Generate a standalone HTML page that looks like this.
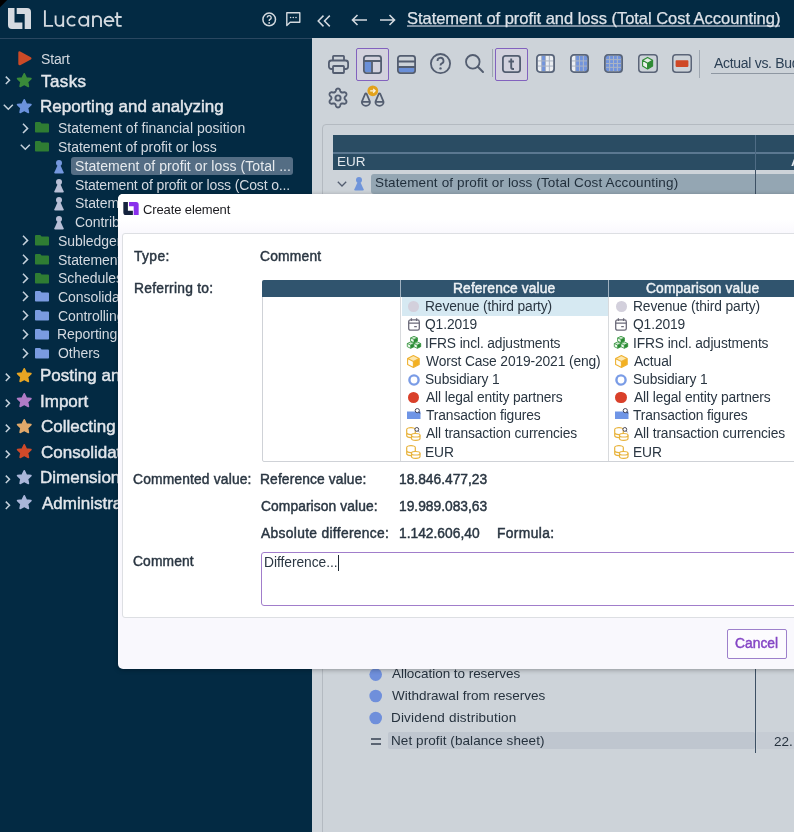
<!DOCTYPE html>
<html><head><meta charset="utf-8"><title>Lucanet</title>
<style>
html,body{margin:0;padding:0;width:794px;height:832px;overflow:hidden;background:#032a43;font-family:"Liberation Sans",sans-serif;}
body{position:relative;}
.t{position:absolute;white-space:nowrap;line-height:1;font-family:"Liberation Sans",sans-serif;-webkit-font-smoothing:antialiased;will-change:transform;}
.a{position:absolute;}
svg{position:absolute;overflow:visible;}
</style></head><body>
<!-- ===== header ===== -->
<div class="a" style="left:0;top:0;width:794px;height:38px;background:#032a43"></div>
<div class="a" style="left:0;top:38px;width:312px;height:1px;background:#2a4760"></div>
<!-- window corner -->
<svg style="left:0;top:0" width="10" height="10"><path d="M0 0H7.2L0 7.2Z" fill="#000"/></svg>
<!-- logo -->
<svg style="left:8px;top:8px" width="23" height="21" viewBox="0 0 23 21">
<path d="M0 0H6.5V14.4H14.4V21H4A4 4 0 0 1 0 17Z" fill="#d5dae0"/>
<path d="M8.7 0H19A4 4 0 0 1 23 4V21H16.7V6.1H8.7Z" fill="#d5dae0"/>
</svg>
<svg style="left:0;top:0" width="130" height="32" viewBox="0 0 130 32">
<g fill="none" stroke="#d3d9df" stroke-width="1.9">
<path d="M44.9 10.2V25.9H53.1"/>
<path d="M55.6 15.4V22.1A3.8 3.8 0 0 0 63.2 22.1V15.4M63.2 21V26.9"/>
<path d="M75.2 17.9A4.55 4.55 0 1 0 75.2 24.3"/>
<circle cx="83.6" cy="21.15" r="4.45"/>
<path d="M88.2 15.4V26.9"/>
<path d="M93 15.4V26.9M93 20.1A4 4 0 0 1 101 20.1V26.9"/>
<path d="M104.6 21.1H113.4A4.4 4.4 0 1 0 112.1 24.3"/>
<path d="M117.2 12.3V24.2Q117.2 25.9 119.4 25.9H121.7M114.7 17H121.7"/>
</g></svg>
<!-- header icons -->
<svg style="left:262px;top:12px" width="15" height="15" viewBox="0 0 15 15">
<circle cx="7.2" cy="7.4" r="6.3" fill="none" stroke="#d3d9df" stroke-width="1.5"/>
<path d="M5.2 5.6A2 2 0 1 1 7.9 7.5C7.3 7.8 7.2 8.2 7.2 8.9" fill="none" stroke="#d3d9df" stroke-width="1.4"/>
<circle cx="7.2" cy="10.9" r="0.9" fill="#d3d9df"/>
</svg>
<svg style="left:286px;top:12px" width="15" height="15" viewBox="0 0 15 15">
<path d="M0.8 0.8H13.8V10.2H4.2L0.8 13.6Z" fill="none" stroke="#d3d9df" stroke-width="1.4" stroke-linejoin="round"/>
<circle cx="4.6" cy="5.5" r="0.8" fill="#d3d9df"/><circle cx="7.3" cy="5.5" r="0.8" fill="#d3d9df"/><circle cx="10" cy="5.5" r="0.8" fill="#d3d9df"/>
</svg>
<svg style="left:317px;top:14.5px" width="15" height="12" viewBox="0 0 15 12">
<path d="M6.5 0.6L1.2 6L6.5 11.4M12.8 0.6L7.5 6L12.8 11.4" fill="none" stroke="#d3d9df" stroke-width="1.5"/>
</svg>
<svg style="left:351px;top:14px" width="17" height="12" viewBox="0 0 17 12">
<path d="M16 6H1.5M6.5 1L1.5 6L6.5 11" fill="none" stroke="#d3d9df" stroke-width="1.6"/>
</svg>
<svg style="left:379px;top:14px" width="17" height="12" viewBox="0 0 17 12">
<path d="M1 6H15.5M10.5 1L15.5 6L10.5 11" fill="none" stroke="#d3d9df" stroke-width="1.6"/>
</svg>

<!-- ===== sidebar ===== -->
<div class="a" style="left:71.2px;top:157px;width:222px;height:18.2px;background:#546d84;border-radius:3px"></div>
<!-- start triangle -->
<svg style="left:18px;top:50.6px" width="14" height="15" viewBox="0 0 14 15">
<path d="M1.6 1.6L12.2 7.3L1.6 13Z" fill="#cb4a27" stroke="#cb4a27" stroke-width="2.6" stroke-linejoin="round"/>
</svg>
<svg style="left:4.6px;top:76.4px" width="5.60" height="8.80" viewBox="0 0 7 11"><path d="M1 0.8L5.6 5.4L1 10" fill="none" stroke="#c6d2dc" stroke-width="1.88"/></svg>
<svg style="left:16px;top:72.2px" width="16.5" height="16.5" viewBox="0 0 24 24"><path d="M12.00 2.60L14.94 8.75L21.70 9.65L16.76 14.35L18.00 21.05L12.00 17.80L6.00 21.05L7.24 14.35L2.30 9.65L9.06 8.75Z" fill="#3a8a3a" stroke="#3a8a3a" stroke-width="2.4" stroke-linejoin="round"/></svg>
<svg style="left:3px;top:104px" width="11" height="6" viewBox="0 0 11 6"><path d="M0.8 0.8L5.3 5.2L9.8 0.8" fill="none" stroke="#c6d2dc" stroke-width="1.5"/></svg>
<svg style="left:16px;top:97.6px" width="16.5" height="16.5" viewBox="0 0 24 24"><path d="M12.00 2.60L14.94 8.75L21.70 9.65L16.76 14.35L18.00 21.05L12.00 17.80L6.00 21.05L7.24 14.35L2.30 9.65L9.06 8.75Z" fill="#6b92dc" stroke="#6b92dc" stroke-width="2.4" stroke-linejoin="round"/></svg>
<svg style="left:21.5px;top:122.6px" width="7.00" height="11.00" viewBox="0 0 7 11"><path d="M1 0.8L5.6 5.4L1 10" fill="none" stroke="#c6d2dc" stroke-width="1.50"/></svg>
<svg style="left:34.9px;top:122.4px" width="14" height="11" viewBox="0 0 14 11"><path d="M0 1Q0 0 1 0H5.2L6.6 1.6H13Q14 1.6 14 2.6V9.8Q14 10.6 13.2 10.6H0.8Q0 10.6 0 9.8Z" fill="#2f7d33"/></svg>
<svg style="left:19.5px;top:144px" width="11" height="6" viewBox="0 0 11 6"><path d="M0.8 0.8L5.3 5.2L9.8 0.8" fill="none" stroke="#c6d2dc" stroke-width="1.5"/></svg>
<svg style="left:34.9px;top:141.1px" width="14" height="11" viewBox="0 0 14 11"><path d="M0 1Q0 0 1 0H5.2L6.6 1.6H13Q14 1.6 14 2.6V9.8Q14 10.6 13.2 10.6H0.8Q0 10.6 0 9.8Z" fill="#2f7d33"/></svg>
<svg style="left:53.8px;top:159.8px" width="10" height="14" viewBox="0 0 10 14"><circle cx="5" cy="3" r="3" fill="#7497de"/><path d="M3.9 4.5H6.1L9.6 12.2Q10 13.6 8.8 13.6H1.2Q0 13.6 0.4 12.2Z" fill="#7497de"/></svg>
<svg style="left:53.8px;top:178.5px" width="10" height="14" viewBox="0 0 10 14"><circle cx="5" cy="3" r="3" fill="#b8bfd6"/><path d="M3.9 4.5H6.1L9.6 12.2Q10 13.6 8.8 13.6H1.2Q0 13.6 0.4 12.2Z" fill="#b8bfd6"/></svg>
<svg style="left:53.8px;top:197.20000000000002px" width="10" height="14" viewBox="0 0 10 14"><circle cx="5" cy="3" r="3" fill="#b8bfd6"/><path d="M3.9 4.5H6.1L9.6 12.2Q10 13.6 8.8 13.6H1.2Q0 13.6 0.4 12.2Z" fill="#b8bfd6"/></svg>
<svg style="left:53.8px;top:215.9px" width="10" height="14" viewBox="0 0 10 14"><circle cx="5" cy="3" r="3" fill="#b8bfd6"/><path d="M3.9 4.5H6.1L9.6 12.2Q10 13.6 8.8 13.6H1.2Q0 13.6 0.4 12.2Z" fill="#b8bfd6"/></svg>
<svg style="left:21.5px;top:235.3px" width="7.00" height="11.00" viewBox="0 0 7 11"><path d="M1 0.8L5.6 5.4L1 10" fill="none" stroke="#c6d2dc" stroke-width="1.50"/></svg>
<svg style="left:34.9px;top:235.3px" width="14" height="11" viewBox="0 0 14 11"><path d="M0 1Q0 0 1 0H5.2L6.6 1.6H13Q14 1.6 14 2.6V9.8Q14 10.6 13.2 10.6H0.8Q0 10.6 0 9.8Z" fill="#2f7d33"/></svg>
<svg style="left:21.5px;top:254.0px" width="7.00" height="11.00" viewBox="0 0 7 11"><path d="M1 0.8L5.6 5.4L1 10" fill="none" stroke="#c6d2dc" stroke-width="1.50"/></svg>
<svg style="left:34.9px;top:254.0px" width="14" height="11" viewBox="0 0 14 11"><path d="M0 1Q0 0 1 0H5.2L6.6 1.6H13Q14 1.6 14 2.6V9.8Q14 10.6 13.2 10.6H0.8Q0 10.6 0 9.8Z" fill="#2f7d33"/></svg>
<svg style="left:21.5px;top:272.7px" width="7.00" height="11.00" viewBox="0 0 7 11"><path d="M1 0.8L5.6 5.4L1 10" fill="none" stroke="#c6d2dc" stroke-width="1.50"/></svg>
<svg style="left:34.9px;top:272.7px" width="14" height="11" viewBox="0 0 14 11"><path d="M0 1Q0 0 1 0H5.2L6.6 1.6H13Q14 1.6 14 2.6V9.8Q14 10.6 13.2 10.6H0.8Q0 10.6 0 9.8Z" fill="#2f7d33"/></svg>
<svg style="left:21.5px;top:291.4px" width="7.00" height="11.00" viewBox="0 0 7 11"><path d="M1 0.8L5.6 5.4L1 10" fill="none" stroke="#c6d2dc" stroke-width="1.50"/></svg>
<svg style="left:34.9px;top:291.4px" width="14" height="11" viewBox="0 0 14 11"><path d="M0 1Q0 0 1 0H5.2L6.6 1.6H13Q14 1.6 14 2.6V9.8Q14 10.6 13.2 10.6H0.8Q0 10.6 0 9.8Z" fill="#7a9be0"/></svg>
<svg style="left:21.5px;top:310.1px" width="7.00" height="11.00" viewBox="0 0 7 11"><path d="M1 0.8L5.6 5.4L1 10" fill="none" stroke="#c6d2dc" stroke-width="1.50"/></svg>
<svg style="left:34.9px;top:310.1px" width="14" height="11" viewBox="0 0 14 11"><path d="M0 1Q0 0 1 0H5.2L6.6 1.6H13Q14 1.6 14 2.6V9.8Q14 10.6 13.2 10.6H0.8Q0 10.6 0 9.8Z" fill="#7a9be0"/></svg>
<svg style="left:21.5px;top:328.8px" width="7.00" height="11.00" viewBox="0 0 7 11"><path d="M1 0.8L5.6 5.4L1 10" fill="none" stroke="#c6d2dc" stroke-width="1.50"/></svg>
<svg style="left:34.9px;top:328.8px" width="14" height="11" viewBox="0 0 14 11"><path d="M0 1Q0 0 1 0H5.2L6.6 1.6H13Q14 1.6 14 2.6V9.8Q14 10.6 13.2 10.6H0.8Q0 10.6 0 9.8Z" fill="#7a9be0"/></svg>
<svg style="left:21.5px;top:347.5px" width="7.00" height="11.00" viewBox="0 0 7 11"><path d="M1 0.8L5.6 5.4L1 10" fill="none" stroke="#c6d2dc" stroke-width="1.50"/></svg>
<svg style="left:34.9px;top:347.5px" width="14" height="11" viewBox="0 0 14 11"><path d="M0 1Q0 0 1 0H5.2L6.6 1.6H13Q14 1.6 14 2.6V9.8Q14 10.6 13.2 10.6H0.8Q0 10.6 0 9.8Z" fill="#7a9be0"/></svg>
<svg style="left:4.6px;top:373.3px" width="5.60" height="8.80" viewBox="0 0 7 11"><path d="M1 0.8L5.6 5.4L1 10" fill="none" stroke="#c6d2dc" stroke-width="1.88"/></svg>
<svg style="left:16px;top:366.9px" width="16.5" height="16.5" viewBox="0 0 24 24"><path d="M12.00 2.60L14.94 8.75L21.70 9.65L16.76 14.35L18.00 21.05L12.00 17.80L6.00 21.05L7.24 14.35L2.30 9.65L9.06 8.75Z" fill="#e8a523" stroke="#e8a523" stroke-width="2.4" stroke-linejoin="round"/></svg>
<svg style="left:4.6px;top:398.8px" width="5.60" height="8.80" viewBox="0 0 7 11"><path d="M1 0.8L5.6 5.4L1 10" fill="none" stroke="#c6d2dc" stroke-width="1.88"/></svg>
<svg style="left:16px;top:392.4px" width="16.5" height="16.5" viewBox="0 0 24 24"><path d="M12.00 2.60L14.94 8.75L21.70 9.65L16.76 14.35L18.00 21.05L12.00 17.80L6.00 21.05L7.24 14.35L2.30 9.65L9.06 8.75Z" fill="#b07cc6" stroke="#b07cc6" stroke-width="2.4" stroke-linejoin="round"/></svg>
<svg style="left:4.6px;top:424.3px" width="5.60" height="8.80" viewBox="0 0 7 11"><path d="M1 0.8L5.6 5.4L1 10" fill="none" stroke="#c6d2dc" stroke-width="1.88"/></svg>
<svg style="left:16px;top:417.9px" width="16.5" height="16.5" viewBox="0 0 24 24"><path d="M12.00 2.60L14.94 8.75L21.70 9.65L16.76 14.35L18.00 21.05L12.00 17.80L6.00 21.05L7.24 14.35L2.30 9.65L9.06 8.75Z" fill="#e0a86a" stroke="#e0a86a" stroke-width="2.4" stroke-linejoin="round"/></svg>
<svg style="left:4.6px;top:449.8px" width="5.60" height="8.80" viewBox="0 0 7 11"><path d="M1 0.8L5.6 5.4L1 10" fill="none" stroke="#c6d2dc" stroke-width="1.88"/></svg>
<svg style="left:16px;top:443.4px" width="16.5" height="16.5" viewBox="0 0 24 24"><path d="M12.00 2.60L14.94 8.75L21.70 9.65L16.76 14.35L18.00 21.05L12.00 17.80L6.00 21.05L7.24 14.35L2.30 9.65L9.06 8.75Z" fill="#cf4a2a" stroke="#cf4a2a" stroke-width="2.4" stroke-linejoin="round"/></svg>
<svg style="left:4.6px;top:475.3px" width="5.60" height="8.80" viewBox="0 0 7 11"><path d="M1 0.8L5.6 5.4L1 10" fill="none" stroke="#c6d2dc" stroke-width="1.88"/></svg>
<svg style="left:16px;top:468.9px" width="16.5" height="16.5" viewBox="0 0 24 24"><path d="M12.00 2.60L14.94 8.75L21.70 9.65L16.76 14.35L18.00 21.05L12.00 17.80L6.00 21.05L7.24 14.35L2.30 9.65L9.06 8.75Z" fill="#aab6d9" stroke="#aab6d9" stroke-width="2.4" stroke-linejoin="round"/></svg>
<svg style="left:4.6px;top:500.8px" width="5.60" height="8.80" viewBox="0 0 7 11"><path d="M1 0.8L5.6 5.4L1 10" fill="none" stroke="#c6d2dc" stroke-width="1.88"/></svg>
<svg style="left:16px;top:494.4px" width="16.5" height="16.5" viewBox="0 0 24 24"><path d="M12.00 2.60L14.94 8.75L21.70 9.65L16.76 14.35L18.00 21.05L12.00 17.80L6.00 21.05L7.24 14.35L2.30 9.65L9.06 8.75Z" fill="#aab6d9" stroke="#aab6d9" stroke-width="2.4" stroke-linejoin="round"/></svg>

<!-- ===== content ===== -->
<div class="a" style="left:312px;top:38px;width:482px;height:794px;background:#cdd3d9"></div>
<!-- toolbar row 1 -->
<svg style="left:328px;top:54.5px" width="21" height="19" viewBox="0 0 21 19">
<path d="M5 5.5V1.5Q5 0.8 5.7 0.8H15.3Q16 0.8 16 1.5V5.5" fill="none" stroke="#535d70" stroke-width="1.8"/>
<rect x="0.9" y="5.5" width="19.2" height="8.5" rx="2.5" fill="none" stroke="#535d70" stroke-width="1.8"/>
<rect x="5" y="11" width="11" height="7" rx="0.8" fill="#cdd3d9" stroke="#535d70" stroke-width="1.8"/>
</svg>
<div class="a" style="left:356px;top:48px;width:30.5px;height:30.5px;border:1px solid #8262be;border-radius:2px;background:#d3d2de"></div>
<svg style="left:363px;top:54.5px" width="19" height="19" viewBox="0 0 19 19">
<rect x="1.5" y="6" width="7" height="11" fill="#6a8fd8"/>
<rect x="0.9" y="0.9" width="17.2" height="17.2" rx="2.5" fill="none" stroke="#535d70" stroke-width="1.8"/>
<path d="M1 6H18M9 6V18" stroke="#535d70" stroke-width="1.8"/>
</svg>
<svg style="left:396.5px;top:54.5px" width="19" height="19" viewBox="0 0 19 19">
<rect x="1.5" y="12" width="16" height="5.5" fill="#6a8fd8"/>
<rect x="0.9" y="0.9" width="17.2" height="17.2" rx="2.5" fill="none" stroke="#535d70" stroke-width="1.8"/>
<path d="M1 6.5H18M1 12H18" stroke="#535d70" stroke-width="1.8"/>
</svg>
<svg style="left:430px;top:53px" width="21" height="21" viewBox="0 0 21 21">
<circle cx="10.5" cy="10.6" r="9.6" fill="none" stroke="#535d70" stroke-width="1.8"/>
<path d="M7.5 8A3 3 0 1 1 11.5 10.6C10.8 11 10.5 11.5 10.5 12.6" fill="none" stroke="#535d70" stroke-width="1.8"/>
<circle cx="10.5" cy="15.4" r="1.2" fill="#535d70"/>
</svg>
<svg style="left:465px;top:54px" width="19" height="19" viewBox="0 0 19 19">
<circle cx="7.8" cy="7.8" r="6.8" fill="none" stroke="#535d70" stroke-width="1.8"/>
<path d="M12.8 12.8L18 18" stroke="#535d70" stroke-width="2" stroke-linecap="round"/>
</svg>
<div class="a" style="left:492px;top:49px;width:1px;height:28px;background:#a0a8b2"></div>
<div class="a" style="left:495px;top:48px;width:30.5px;height:30.5px;border:1px solid #8262be;border-radius:2px;background:#d3d2de"></div>
<svg style="left:501.5px;top:55px" width="19" height="18" viewBox="0 0 19 18">
<rect x="0.9" y="0.9" width="17.2" height="16.2" rx="2.5" fill="none" stroke="#535d70" stroke-width="1.8"/>
<path d="M9.2 3.5V12.3Q9.2 14 11 14H12M6.5 6.5H12" fill="none" stroke="#535d70" stroke-width="1.9"/>
</svg>
<!-- grids -->
<svg style="left:535.7px;top:54.4px" width="19" height="19" viewBox="0 0 19 19"><rect x="0.9" y="0.9" width="17.2" height="17.2" rx="3" fill="#eceff3"/><rect x="5.65" y="1.80" width="3.85" height="15.40" fill="#7294dc"/><path d="M5.65 1.8V17.2" stroke="#aab4c4" stroke-width="1"/><path d="M9.50 1.8V17.2" stroke="#aab4c4" stroke-width="1"/><path d="M13.35 1.8V17.2" stroke="#aab4c4" stroke-width="1"/><path d="M1.8 6.93H17.2" stroke="#aab4c4" stroke-width="1"/><path d="M1.8 12.07H17.2" stroke="#aab4c4" stroke-width="1"/><rect x="0.9" y="0.9" width="17.2" height="17.2" rx="3" fill="none" stroke="#59657a" stroke-width="1.8"/></svg>
<svg style="left:570.2px;top:54.4px" width="19" height="19" viewBox="0 0 19 19"><rect x="0.9" y="0.9" width="17.2" height="17.2" rx="3" fill="#eceff3"/><rect x="5.65" y="1.80" width="3.85" height="15.40" fill="#7294dc"/><rect x="9.50" y="1.80" width="3.85" height="15.40" fill="#7294dc"/><rect x="13.35" y="1.80" width="3.85" height="15.40" fill="#7294dc"/><path d="M5.65 1.8V17.2" stroke="#aab4c4" stroke-width="1"/><path d="M9.50 1.8V17.2" stroke="#aab4c4" stroke-width="1"/><path d="M13.35 1.8V17.2" stroke="#aab4c4" stroke-width="1"/><path d="M1.8 6.93H17.2" stroke="#aab4c4" stroke-width="1"/><path d="M1.8 12.07H17.2" stroke="#aab4c4" stroke-width="1"/><rect x="0.9" y="0.9" width="17.2" height="17.2" rx="3" fill="none" stroke="#59657a" stroke-width="1.8"/></svg>
<svg style="left:603.8px;top:54.4px" width="19" height="19" viewBox="0 0 19 19"><rect x="0.9" y="0.9" width="17.2" height="17.2" rx="3" fill="#eceff3"/><rect x="1.80" y="1.80" width="3.85" height="15.40" fill="#7294dc"/><rect x="5.65" y="1.80" width="3.85" height="15.40" fill="#7294dc"/><rect x="9.50" y="1.80" width="3.85" height="15.40" fill="#7294dc"/><rect x="13.35" y="1.80" width="3.85" height="15.40" fill="#7294dc"/><path d="M5.65 1.8V17.2" stroke="#aab4c4" stroke-width="1"/><path d="M9.50 1.8V17.2" stroke="#aab4c4" stroke-width="1"/><path d="M13.35 1.8V17.2" stroke="#aab4c4" stroke-width="1"/><path d="M1.8 5.65H17.2" stroke="#aab4c4" stroke-width="1"/><path d="M1.8 9.50H17.2" stroke="#aab4c4" stroke-width="1"/><path d="M1.8 13.35H17.2" stroke="#aab4c4" stroke-width="1"/><rect x="0.9" y="0.9" width="17.2" height="17.2" rx="3" fill="none" stroke="#59657a" stroke-width="1.8"/></svg>
<svg style="left:637.5px;top:54px" width="20" height="19" viewBox="0 0 20 19">
<rect x="0.75" y="0.75" width="18.5" height="17.5" rx="3.2" fill="none" stroke="#5b6578" stroke-width="1.5"/>
<path d="M9.60 3.40L14.60 6.30L9.60 9.20L4.60 6.30Z" fill="#e3ece4"/><path d="M4.60 6.30L9.60 9.20L9.60 15.00L4.60 12.10Z" fill="#eef3ef"/><path d="M9.60 9.20L14.60 6.30L14.60 12.10L9.60 15.00Z" fill="#2e8b34"/><path d="M9.60 3.40L14.60 6.30L14.60 12.10L9.60 15.00L4.60 12.10L4.60 6.30ZM4.60 6.30L9.60 9.20L14.60 6.30M9.60 9.20L9.60 15.00" fill="none" stroke="#2e8b34" stroke-width="1.1" stroke-linejoin="round"/>
</svg>
<svg style="left:671.5px;top:54px" width="20" height="19" viewBox="0 0 20 19">
<rect x="0.75" y="0.75" width="18.5" height="17.5" rx="3.2" fill="none" stroke="#5b6578" stroke-width="1.5"/>
<rect x="3.6" y="6.3" width="12.8" height="6.6" rx="0.8" fill="#cf4826"/>
</svg>
<div class="a" style="left:699.2px;top:50px;width:1px;height:28px;background:#a0a8b2"></div>
<div class="a" style="left:711px;top:72.5px;width:83px;height:1px;background:#8e97a2"></div>
<!-- toolbar row 2 -->
<svg style="left:327.1px;top:87px" width="22" height="22" viewBox="0 0 22 22">
<path d="M17.55 11.00L17.55 10.89L17.57 10.77L17.59 10.65L17.62 10.54L17.66 10.42L17.71 10.29L17.77 10.17L17.84 10.04L17.91 9.90L18.00 9.77L18.09 9.62L18.20 9.47L18.32 9.31L18.47 9.14L18.73 8.93L18.98 8.71L19.11 8.52L19.21 8.33L19.29 8.14L19.36 7.96L19.40 7.77L19.43 7.59L19.45 7.41L19.45 7.24L19.44 7.06L19.41 6.90L19.38 6.73L19.32 6.57L19.26 6.42L19.18 6.28L19.10 6.14L19.00 6.00L18.88 5.88L18.76 5.77L18.63 5.66L18.48 5.56L18.33 5.48L18.17 5.40L17.99 5.34L17.81 5.28L17.62 5.24L17.42 5.22L17.20 5.21L16.97 5.24L16.66 5.34L16.35 5.46L16.13 5.50L15.93 5.53L15.74 5.55L15.57 5.56L15.41 5.56L15.25 5.56L15.11 5.55L14.97 5.54L14.84 5.52L14.71 5.50L14.59 5.46L14.48 5.43L14.38 5.38L14.28 5.33L14.18 5.27L14.09 5.20L14.00 5.12L13.91 5.03L13.83 4.94L13.75 4.83L13.67 4.72L13.59 4.60L13.51 4.46L13.43 4.32L13.35 4.17L13.28 4.00L13.20 3.81L13.12 3.60L13.07 3.27L13.01 2.95L12.91 2.73L12.80 2.55L12.67 2.39L12.54 2.24L12.41 2.11L12.27 1.99L12.12 1.89L11.97 1.80L11.81 1.72L11.65 1.66L11.49 1.61L11.33 1.58L11.16 1.56L11.00 1.55L10.84 1.56L10.67 1.58L10.51 1.61L10.35 1.66L10.19 1.72L10.03 1.80L9.88 1.89L9.73 1.99L9.59 2.11L9.46 2.24L9.33 2.39L9.20 2.55L9.09 2.73L8.99 2.95L8.93 3.27L8.88 3.60L8.80 3.81L8.72 4.00L8.65 4.17L8.57 4.32L8.49 4.46L8.41 4.60L8.33 4.72L8.25 4.83L8.17 4.94L8.09 5.03L8.00 5.12L7.91 5.20L7.82 5.27L7.73 5.33L7.62 5.38L7.52 5.43L7.41 5.46L7.29 5.50L7.16 5.52L7.03 5.54L6.89 5.55L6.75 5.56L6.59 5.56L6.43 5.56L6.26 5.55L6.07 5.53L5.87 5.50L5.65 5.46L5.34 5.34L5.03 5.24L4.80 5.21L4.58 5.22L4.38 5.24L4.19 5.28L4.01 5.34L3.83 5.40L3.67 5.48L3.52 5.56L3.37 5.66L3.24 5.77L3.12 5.88L3.00 6.00L2.90 6.14L2.82 6.28L2.74 6.42L2.68 6.57L2.62 6.73L2.59 6.90L2.56 7.06L2.55 7.24L2.55 7.41L2.57 7.59L2.60 7.77L2.64 7.96L2.71 8.14L2.79 8.33L2.89 8.52L3.02 8.71L3.27 8.93L3.53 9.14L3.68 9.31L3.80 9.47L3.91 9.62L4.00 9.77L4.09 9.90L4.16 10.04L4.23 10.17L4.29 10.29L4.34 10.42L4.38 10.54L4.41 10.65L4.43 10.77L4.45 10.89L4.45 11.00L4.45 11.11L4.43 11.23L4.41 11.35L4.38 11.46L4.34 11.58L4.29 11.71L4.23 11.83L4.16 11.96L4.09 12.10L4.00 12.23L3.91 12.38L3.80 12.53L3.68 12.69L3.53 12.86L3.27 13.07L3.02 13.29L2.89 13.48L2.79 13.67L2.71 13.86L2.64 14.04L2.60 14.23L2.57 14.41L2.55 14.59L2.55 14.76L2.56 14.94L2.59 15.10L2.62 15.27L2.68 15.43L2.74 15.58L2.82 15.73L2.90 15.86L3.00 16.00L3.12 16.12L3.24 16.23L3.37 16.34L3.52 16.44L3.67 16.52L3.83 16.60L4.01 16.66L4.19 16.72L4.38 16.76L4.58 16.78L4.80 16.79L5.03 16.76L5.34 16.66L5.65 16.54L5.87 16.50L6.07 16.47L6.26 16.45L6.43 16.44L6.59 16.44L6.75 16.44L6.89 16.45L7.03 16.46L7.16 16.48L7.29 16.50L7.41 16.54L7.52 16.57L7.62 16.62L7.72 16.67L7.82 16.73L7.91 16.80L8.00 16.88L8.09 16.97L8.17 17.06L8.25 17.17L8.33 17.28L8.41 17.40L8.49 17.54L8.57 17.68L8.65 17.83L8.72 18.00L8.80 18.19L8.88 18.40L8.93 18.73L8.99 19.05L9.09 19.27L9.20 19.45L9.33 19.61L9.46 19.76L9.59 19.89L9.73 20.01L9.88 20.11L10.03 20.20L10.19 20.28L10.35 20.34L10.51 20.39L10.67 20.42L10.84 20.44L11.00 20.45L11.16 20.44L11.33 20.42L11.49 20.39L11.65 20.34L11.81 20.28L11.97 20.20L12.12 20.11L12.27 20.01L12.41 19.89L12.54 19.76L12.67 19.61L12.80 19.45L12.91 19.27L13.01 19.05L13.07 18.73L13.12 18.40L13.20 18.19L13.28 18.00L13.35 17.83L13.43 17.68L13.51 17.54L13.59 17.40L13.67 17.28L13.75 17.17L13.83 17.06L13.91 16.97L14.00 16.88L14.09 16.80L14.18 16.73L14.28 16.67L14.38 16.62L14.48 16.57L14.59 16.54L14.71 16.50L14.84 16.48L14.97 16.46L15.11 16.45L15.25 16.44L15.41 16.44L15.57 16.44L15.74 16.45L15.93 16.47L16.13 16.50L16.35 16.54L16.66 16.66L16.97 16.76L17.20 16.79L17.42 16.78L17.62 16.76L17.81 16.72L17.99 16.66L18.17 16.60L18.33 16.52L18.48 16.44L18.63 16.34L18.76 16.23L18.88 16.12L19.00 16.00L19.10 15.86L19.18 15.73L19.26 15.58L19.32 15.43L19.38 15.27L19.41 15.10L19.44 14.94L19.45 14.76L19.45 14.59L19.43 14.41L19.40 14.23L19.36 14.04L19.29 13.86L19.21 13.67L19.11 13.48L18.98 13.29L18.73 13.07L18.47 12.86L18.32 12.69L18.20 12.53L18.09 12.38L18.00 12.23L17.91 12.10L17.84 11.96L17.77 11.83L17.71 11.71L17.66 11.58L17.62 11.46L17.59 11.35L17.57 11.23L17.55 11.11Z" fill="none" stroke="#535d70" stroke-width="1.9" stroke-linejoin="round"/>
<circle cx="11" cy="11" r="2.6" fill="none" stroke="#535d70" stroke-width="1.9"/>
</svg>
<svg style="left:359.5px;top:85px" width="26" height="23" viewBox="0 0 26 23">
<path d="M1.8 16.8L5.1 9Q5.9 7.6 6.7 9L10 16.8M1.8 16.8H10A4.1 4.1 0 0 1 1.8 16.8Z" fill="none" stroke="#535d70" stroke-width="1.8" stroke-linejoin="round"/>
<path d="M15.4 16.8L18.7 9Q19.5 7.6 20.3 9L23.6 16.8M15.4 16.8H23.6A4.1 4.1 0 0 1 15.4 16.8Z" fill="none" stroke="#535d70" stroke-width="1.8" stroke-linejoin="round"/>
<circle cx="12.8" cy="5.8" r="5.4" fill="#e2a21c"/>
<path d="M10.2 5.8H15M13.2 3.9L15.1 5.8L13.2 7.7" fill="none" stroke="#fbf3de" stroke-width="1.3"/>
</svg>

<!-- content panel -->
<div class="a" style="left:321.5px;top:124px;width:500px;height:760px;border:1px solid #b4bac1;border-radius:4px;"></div>
<div class="a" style="left:333px;top:135.3px;width:461px;height:34.7px;background:#2a4c63"></div>
<div class="a" style="left:333px;top:152.2px;width:461px;height:1.6px;background:#5b7891"></div>
<div class="a" style="left:755px;top:135.3px;width:1px;height:34.7px;background:#4f6c85"></div>
<svg style="left:337px;top:180.5px" width="10" height="6" viewBox="0 0 10 6"><path d="M0.8 0.8L5 5L9.2 0.8" fill="none" stroke="#535d70" stroke-width="1.3"/></svg>
<div class="a" style="left:370.8px;top:174px;width:430px;height:19.7px;background:#94a6b3;border-radius:3px 0 0 3px"></div>
<svg style="left:354.2px;top:177px" width="10" height="14" viewBox="0 0 10 14"><circle cx="5" cy="3" r="3" fill="#6f94da"/><path d="M3.9 4.5H6.1L9.6 12.2Q10 13.6 8.8 13.6H1.2Q0 13.6 0.4 12.2Z" fill="#6f94da"/></svg>
<div class="a" style="left:755px;top:170px;width:1.4px;height:583px;background:#3d5064"></div>

<!-- bottom rows -->
<svg style="left:369px;top:668px" width="14" height="60" viewBox="0 0 14 60">
<circle cx="6.7" cy="6.6" r="6.3" fill="#6f8fdb"/>
<circle cx="6.7" cy="28" r="6.3" fill="#6f8fdb"/>
<circle cx="6.7" cy="50" r="6.3" fill="#6f8fdb"/>
</svg>
<div class="a" style="left:387.6px;top:731.8px;width:367.4px;height:17.6px;background:#bfc6cf;border-radius:2px"></div>
<div class="a" style="left:756.5px;top:731.8px;width:38px;height:17.6px;background:#c6ccd4"></div>
<div class="a" style="left:370.5px;top:738.3px;width:10px;height:1.6px;background:#5b6573"></div>
<div class="a" style="left:370.5px;top:743px;width:10px;height:1.6px;background:#5b6573"></div>

<div class="a" style="left:407.4px;top:25.2px;width:373px;height:1.5px;background:#7d90a2"></div>
<div class="t" style="left:406.70px;top:9.83px;font-size:16.5px;font-weight:normal;color:#dde2e8;letter-spacing:-0.034px;-webkit-text-stroke:0.25px #dde2e8;">Statement of profit and loss (Total Cost Accounting)</div>
<div class="t" style="left:41.00px;top:51.55px;font-size:14px;font-weight:normal;color:#d3d9e0;letter-spacing:-0.144px;">Start</div>
<div class="t" style="left:41.30px;top:72.81px;font-size:17px;font-weight:normal;color:#e2e6eb;letter-spacing:0.411px;-webkit-text-stroke:0.45px currentColor;">Tasks</div>
<div class="t" style="left:40.30px;top:98.11px;font-size:17px;font-weight:normal;color:#e2e6eb;letter-spacing:0.014px;-webkit-text-stroke:0.45px currentColor;">Reporting and analyzing</div>
<div class="t" style="left:57.80px;top:121.25px;font-size:14px;font-weight:normal;color:#d3d9e0;letter-spacing:0.017px;">Statement of financial position</div>
<div class="t" style="left:57.80px;top:139.95px;font-size:14px;font-weight:normal;color:#d3d9e0;letter-spacing:-0.031px;">Statement of profit or loss</div>
<div class="t" style="left:74.80px;top:158.85px;font-size:14px;font-weight:normal;color:#e6eaee;letter-spacing:0.075px;">Statement of profit or loss (Total ...</div>
<div class="t" style="left:74.80px;top:177.55px;font-size:14px;font-weight:normal;color:#d3d9e0;letter-spacing:-0.135px;">Statement of profit or loss (Cost o...</div>
<div class="t" style="left:74.80px;top:196.35px;font-size:14px;font-weight:normal;color:#d3d9e0;letter-spacing:-0.050px;">Statement</div>
<div class="t" style="left:74.70px;top:215.15px;font-size:14px;font-weight:normal;color:#d3d9e0;letter-spacing:-0.050px;">Contribution</div>
<div class="t" style="left:57.80px;top:233.85px;font-size:14px;font-weight:normal;color:#d3d9e0;letter-spacing:-0.050px;">Subledgers</div>
<div class="t" style="left:57.80px;top:252.55px;font-size:14px;font-weight:normal;color:#d3d9e0;letter-spacing:-0.050px;">Statements</div>
<div class="t" style="left:57.80px;top:271.25px;font-size:14px;font-weight:normal;color:#d3d9e0;letter-spacing:-0.050px;">Schedules</div>
<div class="t" style="left:57.70px;top:289.95px;font-size:14px;font-weight:normal;color:#d3d9e0;letter-spacing:-0.050px;">Consolidation</div>
<div class="t" style="left:57.70px;top:308.65px;font-size:14px;font-weight:normal;color:#d3d9e0;letter-spacing:-0.050px;">Controlling</div>
<div class="t" style="left:57.30px;top:327.35px;font-size:14px;font-weight:normal;color:#d3d9e0;letter-spacing:-0.050px;">Reporting</div>
<div class="t" style="left:57.80px;top:346.05px;font-size:14px;font-weight:normal;color:#d3d9e0;letter-spacing:-0.050px;">Others</div>
<div class="t" style="left:40.30px;top:367.11px;font-size:17px;font-weight:normal;color:#e2e6eb;letter-spacing:0.000px;-webkit-text-stroke:0.45px currentColor;">Posting and</div>
<div class="t" style="left:40.10px;top:392.61px;font-size:17px;font-weight:normal;color:#e2e6eb;letter-spacing:0.000px;-webkit-text-stroke:0.45px currentColor;">Import</div>
<div class="t" style="left:40.80px;top:418.11px;font-size:17px;font-weight:normal;color:#e2e6eb;letter-spacing:0.000px;-webkit-text-stroke:0.45px currentColor;">Collecting</div>
<div class="t" style="left:40.80px;top:443.61px;font-size:17px;font-weight:normal;color:#e2e6eb;letter-spacing:0.000px;-webkit-text-stroke:0.45px currentColor;">Consolidation</div>
<div class="t" style="left:40.30px;top:469.11px;font-size:17px;font-weight:normal;color:#e2e6eb;letter-spacing:0.000px;-webkit-text-stroke:0.45px currentColor;">Dimensions</div>
<div class="t" style="left:41.60px;top:494.61px;font-size:17px;font-weight:normal;color:#e2e6eb;letter-spacing:0.000px;-webkit-text-stroke:0.45px currentColor;">Administration</div>
<div class="t" style="left:713.80px;top:56.45px;font-size:14px;font-weight:normal;color:#2c4055;letter-spacing:-0.300px;">Actual vs. Budget</div>
<div class="t" style="left:336.70px;top:155.37px;font-size:13.5px;font-weight:normal;color:#e4e9ee;letter-spacing:0.000px;">EUR</div>
<div class="t" style="left:790.50px;top:154.87px;font-size:13.5px;font-weight:bold;color:#e4e9ee;letter-spacing:0.000px;">A</div>
<div class="t" style="left:374.80px;top:176.37px;font-size:13.5px;font-weight:normal;color:#1f2d3a;letter-spacing:0.135px;">Statement of profit or loss (Total Cost Accounting)</div>
<div class="t" style="left:392.10px;top:667.47px;font-size:13.5px;font-weight:normal;color:#26323e;letter-spacing:-0.043px;">Allocation to reserves</div>
<div class="t" style="left:392.10px;top:688.87px;font-size:13.5px;font-weight:normal;color:#26323e;letter-spacing:0.014px;">Withdrawal from reserves</div>
<div class="t" style="left:391.00px;top:710.97px;font-size:13.5px;font-weight:normal;color:#26323e;letter-spacing:0.187px;">Dividend distribution</div>
<div class="t" style="left:391.00px;top:733.67px;font-size:13.5px;font-weight:normal;color:#26323e;letter-spacing:0.077px;">Net profit (balance sheet)</div>
<div class="t" style="left:774.40px;top:734.57px;font-size:13.5px;font-weight:normal;color:#26323e;letter-spacing:0.000px;">22.</div>

<!-- ===== modal ===== -->
<div class="a" style="left:117.7px;top:193.7px;width:700px;height:475.3px;background:#f9f8fd;border-radius:5px;box-shadow:0 1px 5px rgba(0,0,0,0.3)"></div>
<div class="a" style="left:117.7px;top:193.7px;width:677px;height:40px;background:linear-gradient(#fff 0,#fff 26px,#f9f8fd 40px);border-radius:5px 0 0 0"></div>
<svg style="left:122.5px;top:202.4px" width="16" height="13" viewBox="0 0 15.1 12.8">
<path d="M0 0H4.5V8.6H9.4V12.8H2.5A2.5 2.5 0 0 1 0 10.3Z" fill="#15233d"/>
<path d="M5.6 0H12.6A2.5 2.5 0 0 1 15.1 2.5V12.8H10.2V4.1H5.6Z" fill="#8a30ec"/>
</svg>
<div class="a" style="left:122.4px;top:233.4px;width:700px;height:383px;background:#fff;border:1px solid #dddfe3;border-radius:3px"></div>
<!-- modal table -->
<div class="a" style="left:261.5px;top:280.4px;width:600px;height:179.6px;border:1px solid #cfd2d7;border-radius:2px;background:#fff"></div>
<div class="a" style="left:261.5px;top:280.4px;width:533px;height:16.8px;background:#30546e;border-radius:2px 0 0 0"></div>
<div class="a" style="left:400px;top:280.4px;width:1px;height:16.8px;background:#9fb1c0"></div>
<div class="a" style="left:608px;top:280.4px;width:1px;height:16.8px;background:#9fb1c0"></div>
<div class="a" style="left:400px;top:297.2px;width:1px;height:163.6px;background:#d8dadd"></div>
<div class="a" style="left:608px;top:297.2px;width:1px;height:163.6px;background:#d8dadd"></div>
<div class="a" style="left:401.5px;top:297.2px;width:206.5px;height:18.5px;background:#d6e9f2"></div>
<div class="a" style="left:408.20000000000005px;top:301.4px;width:10.6px;height:10.6px;border-radius:50%;background:#d3d0dc"></div>
<svg style="left:407.6px;top:318.2px" width="12" height="13" viewBox="0 0 12 13"><rect x="0.7" y="1.9" width="10.6" height="10.3" rx="1.8" fill="none" stroke="#6b6a79" stroke-width="1.3"/><path d="M0.8 5.2H11.2M3.4 0.3V3M8.6 0.3V3M6.2 8.6H8.8" stroke="#6b6a79" stroke-width="1.3"/></svg>
<svg style="left:406.6px;top:336px" width="14" height="13" viewBox="0 0 14 13"><path d="M7.00 0.30L10.40 1.90L7.00 3.50L3.60 1.90Z" fill="#cfe8cf"/><path d="M3.60 1.90L7.00 3.50L7.00 6.70L3.60 5.10Z" fill="#f2faf2"/><path d="M7.00 3.50L10.40 1.90L10.40 5.10L7.00 6.70Z" fill="#2a8a33"/><path d="M7.00 0.30L10.40 1.90L10.40 5.10L7.00 6.70L3.60 5.10L3.60 1.90ZM3.60 1.90L7.00 3.50L10.40 1.90M7.00 3.50L7.00 6.70" fill="none" stroke="#2f9038" stroke-width="0.8" stroke-linejoin="round"/><path d="M3.70 5.90L7.10 7.50L3.70 9.10L0.30 7.50Z" fill="#cfe8cf"/><path d="M0.30 7.50L3.70 9.10L3.70 12.30L0.30 10.70Z" fill="#f2faf2"/><path d="M3.70 9.10L7.10 7.50L7.10 10.70L3.70 12.30Z" fill="#2a8a33"/><path d="M3.70 5.90L7.10 7.50L7.10 10.70L3.70 12.30L0.30 10.70L0.30 7.50ZM0.30 7.50L3.70 9.10L7.10 7.50M3.70 9.10L3.70 12.30" fill="none" stroke="#2f9038" stroke-width="0.8" stroke-linejoin="round"/><path d="M10.30 5.90L13.70 7.50L10.30 9.10L6.90 7.50Z" fill="#cfe8cf"/><path d="M6.90 7.50L10.30 9.10L10.30 12.30L6.90 10.70Z" fill="#f2faf2"/><path d="M10.30 9.10L13.70 7.50L13.70 10.70L10.30 12.30Z" fill="#2a8a33"/><path d="M10.30 5.90L13.70 7.50L13.70 10.70L10.30 12.30L6.90 10.70L6.90 7.50ZM6.90 7.50L10.30 9.10L13.70 7.50M10.30 9.10L10.30 12.30" fill="none" stroke="#2f9038" stroke-width="0.8" stroke-linejoin="round"/></svg>
<svg style="left:407.0px;top:354.6px" width="13" height="13" viewBox="0 0 13 13"><path d="M6.40 0.60L12.20 3.55L6.40 6.50L0.60 3.55Z" fill="#fde7ad"/><path d="M0.60 3.55L6.40 6.50L6.40 12.40L0.60 9.45Z" fill="#fffdf5"/><path d="M6.40 6.50L12.20 3.55L12.20 9.45L6.40 12.40Z" fill="#f3b020"/><path d="M6.40 0.60L12.20 3.55L12.20 9.45L6.40 12.40L0.60 9.45L0.60 3.55ZM0.60 3.55L6.40 6.50L12.20 3.55M6.40 6.50L6.40 12.40" fill="none" stroke="#efb233" stroke-width="1.1" stroke-linejoin="round"/></svg>
<svg style="left:407.6px;top:373.8px" width="12" height="12" viewBox="0 0 12 12"><circle cx="6" cy="6" r="4.6" fill="none" stroke="#7a9ce6" stroke-width="2.4"/></svg>
<div class="a" style="left:407.6px;top:391.5px;width:11.8px;height:11.8px;border-radius:50%;background:#d9402a"></div>
<svg style="left:407.40000000000003px;top:408.3px" width="14" height="11" viewBox="0 0 14 11">
<rect x="0" y="3.5" width="13.5" height="7.5" fill="#6f95e6"/>
<circle cx="10.3" cy="2.6" r="2.1" fill="#fff" stroke="#34364a" stroke-width="0.9"/>
<path d="M11.8 4.1L13.2 5.4" stroke="#34364a" stroke-width="1"/>
</svg>
<svg style="left:406.40000000000003px;top:427.2px" width="15" height="14" viewBox="0 0 15 14"><ellipse cx="5" cy="2.6" rx="4.3" ry="2" fill="#fff" stroke="#e8b33c" stroke-width="1.2"/><path d="M0.7 2.6V8.6Q0.7 10.6 5 10.6Q9.3 10.6 9.3 8.6V2.6M0.7 5.6Q0.7 7.6 5 7.6Q9.3 7.6 9.3 5.6" fill="#fff" stroke="#e8b33c" stroke-width="1.2"/><path d="M5.5 8.2Q5.5 6.5 9.5 6.5Q14 6.5 14 8.2V11.6Q14 13.4 9.7 13.4Q5.5 13.4 5.5 11.6Z" fill="#fff" stroke="#e8b33c" stroke-width="1.2"/><path d="M5.5 8.4Q5.5 10 9.7 10Q14 10 14 8.4" fill="none" stroke="#e8b33c" stroke-width="1.2"/><circle cx="10.8" cy="2.4" r="1.9" fill="#fff" stroke="#34364a" stroke-width="0.9"/><path d="M12.2 3.8L13.3 4.9" stroke="#34364a" stroke-width="1"/></svg>
<svg style="left:406.40000000000003px;top:445.2px" width="15" height="14" viewBox="0 0 15 14"><ellipse cx="5" cy="2.6" rx="4.3" ry="2" fill="#fff" stroke="#e8b33c" stroke-width="1.2"/><path d="M0.7 2.6V8.6Q0.7 10.6 5 10.6Q9.3 10.6 9.3 8.6V2.6M0.7 5.6Q0.7 7.6 5 7.6Q9.3 7.6 9.3 5.6" fill="#fff" stroke="#e8b33c" stroke-width="1.2"/><path d="M5.5 8.2Q5.5 6.5 9.5 6.5Q14 6.5 14 8.2V11.6Q14 13.4 9.7 13.4Q5.5 13.4 5.5 11.6Z" fill="#fff" stroke="#e8b33c" stroke-width="1.2"/><path d="M5.5 8.4Q5.5 10 9.7 10Q14 10 14 8.4" fill="none" stroke="#e8b33c" stroke-width="1.2"/></svg>
<div class="a" style="left:616.0000000000001px;top:301.4px;width:10.6px;height:10.6px;border-radius:50%;background:#d3d0dc"></div>
<svg style="left:615.4000000000001px;top:318.2px" width="12" height="13" viewBox="0 0 12 13"><rect x="0.7" y="1.9" width="10.6" height="10.3" rx="1.8" fill="none" stroke="#6b6a79" stroke-width="1.3"/><path d="M0.8 5.2H11.2M3.4 0.3V3M8.6 0.3V3M6.2 8.6H8.8" stroke="#6b6a79" stroke-width="1.3"/></svg>
<svg style="left:614.4000000000001px;top:336px" width="14" height="13" viewBox="0 0 14 13"><path d="M7.00 0.30L10.40 1.90L7.00 3.50L3.60 1.90Z" fill="#cfe8cf"/><path d="M3.60 1.90L7.00 3.50L7.00 6.70L3.60 5.10Z" fill="#f2faf2"/><path d="M7.00 3.50L10.40 1.90L10.40 5.10L7.00 6.70Z" fill="#2a8a33"/><path d="M7.00 0.30L10.40 1.90L10.40 5.10L7.00 6.70L3.60 5.10L3.60 1.90ZM3.60 1.90L7.00 3.50L10.40 1.90M7.00 3.50L7.00 6.70" fill="none" stroke="#2f9038" stroke-width="0.8" stroke-linejoin="round"/><path d="M3.70 5.90L7.10 7.50L3.70 9.10L0.30 7.50Z" fill="#cfe8cf"/><path d="M0.30 7.50L3.70 9.10L3.70 12.30L0.30 10.70Z" fill="#f2faf2"/><path d="M3.70 9.10L7.10 7.50L7.10 10.70L3.70 12.30Z" fill="#2a8a33"/><path d="M3.70 5.90L7.10 7.50L7.10 10.70L3.70 12.30L0.30 10.70L0.30 7.50ZM0.30 7.50L3.70 9.10L7.10 7.50M3.70 9.10L3.70 12.30" fill="none" stroke="#2f9038" stroke-width="0.8" stroke-linejoin="round"/><path d="M10.30 5.90L13.70 7.50L10.30 9.10L6.90 7.50Z" fill="#cfe8cf"/><path d="M6.90 7.50L10.30 9.10L10.30 12.30L6.90 10.70Z" fill="#f2faf2"/><path d="M10.30 9.10L13.70 7.50L13.70 10.70L10.30 12.30Z" fill="#2a8a33"/><path d="M10.30 5.90L13.70 7.50L13.70 10.70L10.30 12.30L6.90 10.70L6.90 7.50ZM6.90 7.50L10.30 9.10L13.70 7.50M10.30 9.10L10.30 12.30" fill="none" stroke="#2f9038" stroke-width="0.8" stroke-linejoin="round"/></svg>
<svg style="left:614.8000000000001px;top:354.6px" width="13" height="13" viewBox="0 0 13 13"><path d="M6.40 0.60L12.20 3.55L6.40 6.50L0.60 3.55Z" fill="#fde7ad"/><path d="M0.60 3.55L6.40 6.50L6.40 12.40L0.60 9.45Z" fill="#fffdf5"/><path d="M6.40 6.50L12.20 3.55L12.20 9.45L6.40 12.40Z" fill="#f3b020"/><path d="M6.40 0.60L12.20 3.55L12.20 9.45L6.40 12.40L0.60 9.45L0.60 3.55ZM0.60 3.55L6.40 6.50L12.20 3.55M6.40 6.50L6.40 12.40" fill="none" stroke="#efb233" stroke-width="1.1" stroke-linejoin="round"/></svg>
<svg style="left:615.4000000000001px;top:373.8px" width="12" height="12" viewBox="0 0 12 12"><circle cx="6" cy="6" r="4.6" fill="none" stroke="#7a9ce6" stroke-width="2.4"/></svg>
<div class="a" style="left:615.4000000000001px;top:391.5px;width:11.8px;height:11.8px;border-radius:50%;background:#d9402a"></div>
<svg style="left:615.2px;top:408.3px" width="14" height="11" viewBox="0 0 14 11">
<rect x="0" y="3.5" width="13.5" height="7.5" fill="#6f95e6"/>
<circle cx="10.3" cy="2.6" r="2.1" fill="#fff" stroke="#34364a" stroke-width="0.9"/>
<path d="M11.8 4.1L13.2 5.4" stroke="#34364a" stroke-width="1"/>
</svg>
<svg style="left:614.2px;top:427.2px" width="15" height="14" viewBox="0 0 15 14"><ellipse cx="5" cy="2.6" rx="4.3" ry="2" fill="#fff" stroke="#e8b33c" stroke-width="1.2"/><path d="M0.7 2.6V8.6Q0.7 10.6 5 10.6Q9.3 10.6 9.3 8.6V2.6M0.7 5.6Q0.7 7.6 5 7.6Q9.3 7.6 9.3 5.6" fill="#fff" stroke="#e8b33c" stroke-width="1.2"/><path d="M5.5 8.2Q5.5 6.5 9.5 6.5Q14 6.5 14 8.2V11.6Q14 13.4 9.7 13.4Q5.5 13.4 5.5 11.6Z" fill="#fff" stroke="#e8b33c" stroke-width="1.2"/><path d="M5.5 8.4Q5.5 10 9.7 10Q14 10 14 8.4" fill="none" stroke="#e8b33c" stroke-width="1.2"/><circle cx="10.8" cy="2.4" r="1.9" fill="#fff" stroke="#34364a" stroke-width="0.9"/><path d="M12.2 3.8L13.3 4.9" stroke="#34364a" stroke-width="1"/></svg>
<svg style="left:614.2px;top:445.2px" width="15" height="14" viewBox="0 0 15 14"><ellipse cx="5" cy="2.6" rx="4.3" ry="2" fill="#fff" stroke="#e8b33c" stroke-width="1.2"/><path d="M0.7 2.6V8.6Q0.7 10.6 5 10.6Q9.3 10.6 9.3 8.6V2.6M0.7 5.6Q0.7 7.6 5 7.6Q9.3 7.6 9.3 5.6" fill="#fff" stroke="#e8b33c" stroke-width="1.2"/><path d="M5.5 8.2Q5.5 6.5 9.5 6.5Q14 6.5 14 8.2V11.6Q14 13.4 9.7 13.4Q5.5 13.4 5.5 11.6Z" fill="#fff" stroke="#e8b33c" stroke-width="1.2"/><path d="M5.5 8.4Q5.5 10 9.7 10Q14 10 14 8.4" fill="none" stroke="#e8b33c" stroke-width="1.2"/></svg>
<!-- textarea -->
<div class="a" style="left:260.8px;top:552.4px;width:600px;height:52px;border:1px solid #a17dcb;border-radius:3px;background:#fff"></div>
<div class="a" style="left:338px;top:554.5px;width:1.2px;height:16px;background:#1d2730"></div>
<!-- cancel -->
<div class="a" style="left:727px;top:629px;width:57.5px;height:28px;border:1px solid #9d80cb;border-radius:2px;background:#fcfbfe"></div>
<div class="t" style="left:142.70px;top:202.90px;font-size:13px;font-weight:normal;color:#1b1b1f;letter-spacing:-0.121px;">Create element</div>
<div class="t" style="left:134.40px;top:249.92px;font-size:13.8px;font-weight:normal;color:#2a3642;letter-spacing:0.396px;-webkit-text-stroke:0.45px currentColor;">Type:</div>
<div class="t" style="left:260.10px;top:249.92px;font-size:13.8px;font-weight:normal;color:#2a3642;letter-spacing:0.220px;-webkit-text-stroke:0.45px currentColor;">Comment</div>
<div class="t" style="left:133.60px;top:282.32px;font-size:13.8px;font-weight:normal;color:#2a3642;letter-spacing:0.267px;-webkit-text-stroke:0.45px currentColor;">Referring to:</div>
<div class="t" style="left:453.10px;top:281.52px;font-size:13.8px;font-weight:normal;color:#eef2f5;letter-spacing:0.120px;-webkit-text-stroke:0.45px currentColor;">Reference value</div>
<div class="t" style="left:645.80px;top:281.52px;font-size:13.8px;font-weight:normal;color:#eef2f5;letter-spacing:0.124px;-webkit-text-stroke:0.45px currentColor;">Comparison value</div>
<div class="t" style="left:424.80px;top:300.22px;font-size:13.8px;font-weight:normal;color:#2a3642;letter-spacing:-0.120px;">Revenue (third party)</div>
<div class="t" style="left:632.60px;top:300.22px;font-size:13.8px;font-weight:normal;color:#2a3642;letter-spacing:-0.120px;">Revenue (third party)</div>
<div class="t" style="left:425.30px;top:318.40px;font-size:13.8px;font-weight:normal;color:#2a3642;letter-spacing:-0.120px;">Q1.2019</div>
<div class="t" style="left:633.10px;top:318.40px;font-size:13.8px;font-weight:normal;color:#2a3642;letter-spacing:-0.120px;">Q1.2019</div>
<div class="t" style="left:424.70px;top:336.58px;font-size:13.8px;font-weight:normal;color:#2a3642;letter-spacing:-0.120px;">IFRS incl. adjustments</div>
<div class="t" style="left:632.50px;top:336.58px;font-size:13.8px;font-weight:normal;color:#2a3642;letter-spacing:-0.120px;">IFRS incl. adjustments</div>
<div class="t" style="left:425.90px;top:354.76px;font-size:13.8px;font-weight:normal;color:#2a3642;letter-spacing:-0.120px;">Worst Case 2019-2021 (eng)</div>
<div class="t" style="left:633.70px;top:354.76px;font-size:13.8px;font-weight:normal;color:#2a3642;letter-spacing:-0.120px;">Actual</div>
<div class="t" style="left:425.30px;top:372.94px;font-size:13.8px;font-weight:normal;color:#2a3642;letter-spacing:-0.120px;">Subsidiary 1</div>
<div class="t" style="left:633.10px;top:372.94px;font-size:13.8px;font-weight:normal;color:#2a3642;letter-spacing:-0.120px;">Subsidiary 1</div>
<div class="t" style="left:425.90px;top:391.12px;font-size:13.8px;font-weight:normal;color:#2a3642;letter-spacing:-0.120px;">All legal entity partners</div>
<div class="t" style="left:633.70px;top:391.12px;font-size:13.8px;font-weight:normal;color:#2a3642;letter-spacing:-0.120px;">All legal entity partners</div>
<div class="t" style="left:425.60px;top:409.30px;font-size:13.8px;font-weight:normal;color:#2a3642;letter-spacing:-0.120px;">Transaction figures</div>
<div class="t" style="left:633.40px;top:409.30px;font-size:13.8px;font-weight:normal;color:#2a3642;letter-spacing:-0.120px;">Transaction figures</div>
<div class="t" style="left:425.90px;top:427.48px;font-size:13.8px;font-weight:normal;color:#2a3642;letter-spacing:-0.120px;">All transaction currencies</div>
<div class="t" style="left:633.70px;top:427.48px;font-size:13.8px;font-weight:normal;color:#2a3642;letter-spacing:-0.120px;">All transaction currencies</div>
<div class="t" style="left:424.80px;top:445.66px;font-size:13.8px;font-weight:normal;color:#2a3642;letter-spacing:-0.120px;">EUR</div>
<div class="t" style="left:632.60px;top:445.66px;font-size:13.8px;font-weight:normal;color:#2a3642;letter-spacing:-0.120px;">EUR</div>
<div class="t" style="left:133.30px;top:473.32px;font-size:13.8px;font-weight:normal;color:#2a3642;letter-spacing:0.174px;-webkit-text-stroke:0.45px currentColor;">Commented value:</div>
<div class="t" style="left:260.20px;top:473.32px;font-size:13.8px;font-weight:normal;color:#2a3642;letter-spacing:0.134px;-webkit-text-stroke:0.45px currentColor;">Reference value:</div>
<div class="t" style="left:260.60px;top:500.12px;font-size:13.8px;font-weight:normal;color:#2a3642;letter-spacing:0.092px;-webkit-text-stroke:0.45px currentColor;">Comparison value:</div>
<div class="t" style="left:261.30px;top:526.82px;font-size:13.8px;font-weight:normal;color:#2a3642;letter-spacing:0.327px;-webkit-text-stroke:0.45px currentColor;">Absolute difference:</div>
<div class="t" style="left:398.60px;top:473.32px;font-size:13.8px;font-weight:normal;color:#2a3642;letter-spacing:-0.006px;-webkit-text-stroke:0.45px currentColor;">18.846.477,23</div>
<div class="t" style="left:398.60px;top:500.12px;font-size:13.8px;font-weight:normal;color:#2a3642;letter-spacing:-0.006px;-webkit-text-stroke:0.45px currentColor;">19.989.083,63</div>
<div class="t" style="left:398.60px;top:526.82px;font-size:13.8px;font-weight:normal;color:#2a3642;letter-spacing:-0.000px;-webkit-text-stroke:0.45px currentColor;">1.142.606,40</div>
<div class="t" style="left:496.70px;top:526.82px;font-size:13.8px;font-weight:normal;color:#2a3642;letter-spacing:0.370px;-webkit-text-stroke:0.45px currentColor;">Formula:</div>
<div class="t" style="left:133.10px;top:554.52px;font-size:13.8px;font-weight:normal;color:#2a3642;letter-spacing:0.136px;-webkit-text-stroke:0.45px currentColor;">Comment</div>
<div class="t" style="left:263.60px;top:556.12px;font-size:13.8px;font-weight:normal;color:#2a3642;letter-spacing:-0.043px;">Difference...</div>
<div class="t" style="left:735.30px;top:636.82px;font-size:13.8px;font-weight:normal;color:#8445c5;letter-spacing:0.022px;-webkit-text-stroke:0.45px currentColor;">Cancel</div>
</body></html>
